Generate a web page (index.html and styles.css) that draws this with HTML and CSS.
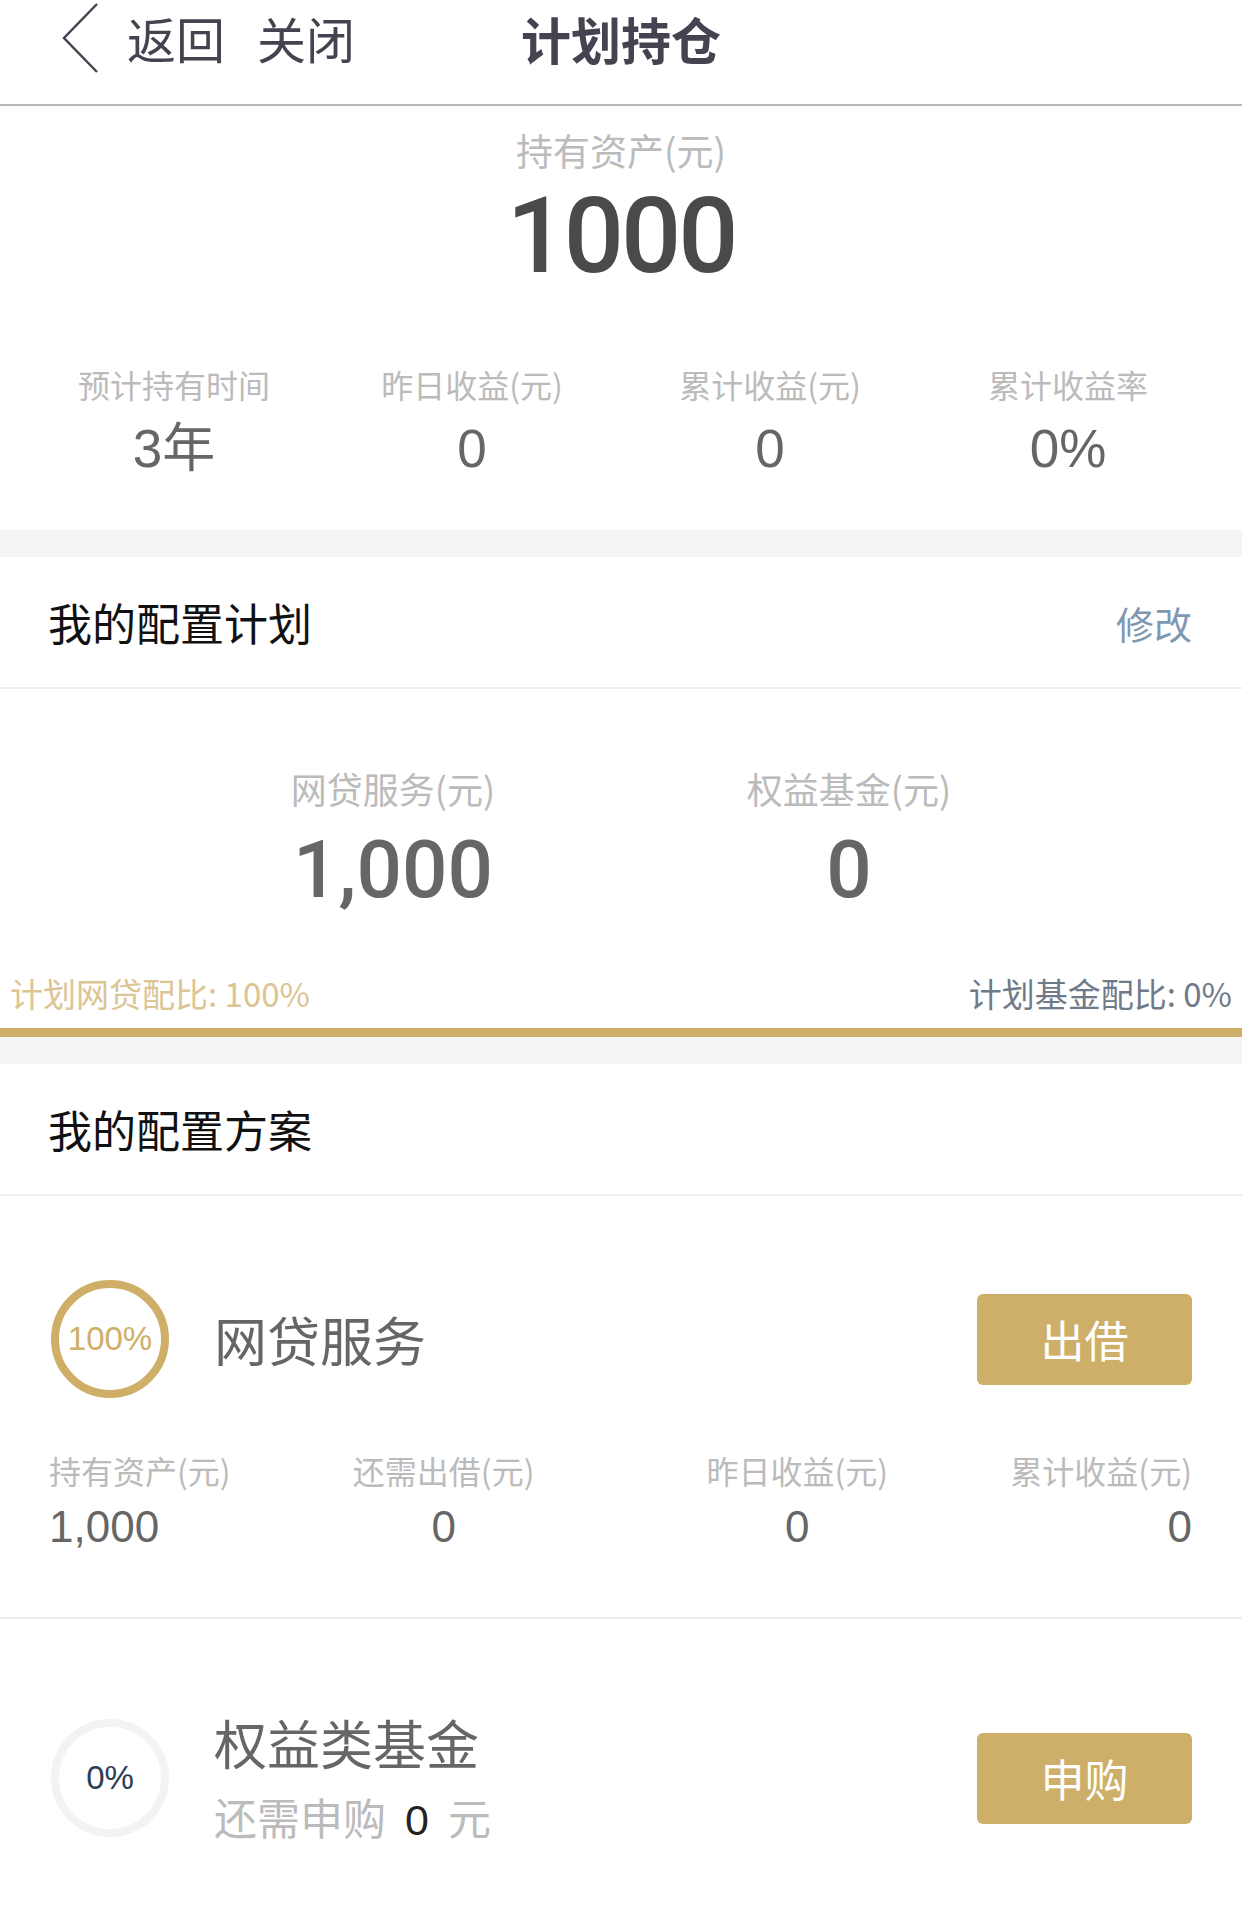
FILE: index.html
```html
<!DOCTYPE html>
<html lang="zh-CN">
<head>
  <meta charset="UTF-8" />
  <title>计划持仓</title>
  <meta name="viewport" content="width=device-width, initial-scale=1.0" />
  <link rel="stylesheet" href="styles.css">
</head>
<body>

<div class="nav">
  <div class="nav-left">
    <svg class="nav-back" width="36" height="70" viewBox="0 0 36 70">
      <polyline points="35,1 2,35 35,69" fill="none" stroke="#45434f" stroke-width="2.5" />
    </svg>
    <span class="nav-link">返回</span>
    <span class="nav-link nav-close">关闭</span>
  </div>
  <div class="nav-title">计划持仓</div>
  <div></div>
</div>

<section class="summary">
  <div class="summary-label">持有资产(元)</div>
  <div class="summary-amount">1000</div>
  <div class="summary-stats">
    <div class="summary-stat">
      <div class="stat-label">预计持有时间</div>
      <div class="stat-value">3年</div>
    </div>
    <div class="summary-stat">
      <div class="stat-label">昨日收益(元)</div>
      <div class="stat-value">0</div>
    </div>
    <div class="summary-stat">
      <div class="stat-label">累计收益(元)</div>
      <div class="stat-value">0</div>
    </div>
    <div class="summary-stat">
      <div class="stat-label">累计收益率</div>
      <div class="stat-value">0%</div>
    </div>
  </div>
</section>

<section class="card card-plan">
  <div class="card-head">
    <h2>我的配置计划</h2>
    <a class="card-edit">修改</a>
  </div>
  <div class="plan-amounts">
    <div class="plan-col">
      <div class="plan-label">网贷服务(元)</div>
      <div class="plan-value">1,000</div>
    </div>
    <div class="plan-col">
      <div class="plan-label">权益基金(元)</div>
      <div class="plan-value">0</div>
    </div>
  </div>
  <div class="plan-ratio">
    <span class="ratio-loan">计划网贷配比: 100%</span>
    <span class="ratio-fund">计划基金配比: 0%</span>
  </div>
  <div class="plan-bar"><div class="plan-bar-fill" style="width: 100%"></div></div>
</section>

<section class="card">
  <div class="card-head">
    <h2>我的配置方案</h2>
  </div>

  <div class="scheme scheme-loan">
    <div class="scheme-row">
      <div class="ring ring-full">100%</div>
      <div class="scheme-info">
        <div class="scheme-name">网贷服务</div>
      </div>
      <button class="scheme-btn">出借</button>
    </div>
    <div class="scheme-stats">
      <div class="stats-half">
        <div class="cell cell-left">
          <div class="stat-label">持有资产(元)</div>
          <div class="cell-value">1,000</div>
        </div>
        <div class="cell">
          <div class="stat-label">还需出借(元)</div>
          <div class="cell-value">0</div>
        </div>
      </div>
      <div class="stats-half">
        <div class="cell">
          <div class="stat-label">昨日收益(元)</div>
          <div class="cell-value">0</div>
        </div>
        <div class="cell cell-right">
          <div class="stat-label">累计收益(元)</div>
          <div class="cell-value">0</div>
        </div>
      </div>
    </div>
  </div>

  <div class="scheme scheme-fund">
    <div class="scheme-row">
      <div class="ring ring-empty">0%</div>
      <div class="scheme-info">
        <div class="scheme-name">权益类基金</div>
        <div class="scheme-sub">还需申购<span class="scheme-sub-num">0</span>元</div>
      </div>
      <button class="scheme-btn">申购</button>
    </div>
  </div>
</section>

</body>
</html>
```

FILE: styles.css
```css
body {
  font-family: "Noto Sans CJK SC", sans-serif;
  background: #f4f4f4;
  margin: 0;
  color: #333;
}

/* top bar */
.nav {
  display: grid;
  grid-template-columns: 1fr auto 1fr;
  align-items: center;
  height: 76px;
  padding-bottom: 28px;
  background: #fff;
  border-bottom: 2px solid #b8b8b8;
}

.nav-left {
  display: flex;
  align-items: center;
  padding-left: 62px;
}

.nav-back {
  margin-right: 29px;
}

.nav-link {
  font-size: 49px;
  line-height: 60px;
  color: #45434f;
}

.nav-close {
  margin-left: 32px;
}

.nav-title {
  font-size: 50px;
  line-height: 60px;
  font-weight: 700;
  color: #45434f;
}

/* holdings summary */
.summary {
  background: #fff;
  padding: 22px 25px 51px;
  margin-bottom: 27px;
  text-align: center;
}

.summary-label {
  font-size: 37px;
  line-height: 44px;
  color: #bbb;
}

.summary-amount {
  margin-top: 11px;
  font-family: Roboto, "Liberation Sans", sans-serif;
  font-weight: 500;
  font-size: 106px;
  line-height: 106px;
  letter-spacing: -3px;
  color: #4a4a4a;
}

.summary-stats {
  display: grid;
  grid-template-columns: repeat(4, 1fr);
  margin-top: 73px;
}

.stat-label {
  font-size: 32px;
  line-height: 44px;
  color: #bbb;
  white-space: nowrap;
}

.stat-value {
  margin-top: 13px;
  font-family: "Liberation Sans", "Noto Sans CJK SC", sans-serif;
  font-size: 53px;
  line-height: 60px;
  color: #666;
}

/* cards */
.card {
  background: #fff;
}

.card-plan {
  margin-bottom: 27px;
}

.card-head {
  display: flex;
  justify-content: space-between;
  align-items: center;
  height: 130px;
  padding: 0 50px 0 48px;
  border-bottom: 2px solid #eee;
}

.card-head h2 {
  margin: 0;
  font-size: 44px;
  font-weight: 400;
  color: #111;
}

.card-edit {
  font-size: 38px;
  color: #7f98b2;
  cursor: pointer;
}

.plan-amounts {
  display: grid;
  grid-template-columns: 1fr 1fr;
  padding: 75px 165px 0;
  text-align: center;
}

.plan-label {
  font-size: 36px;
  line-height: 48px;
  color: #bbb;
}

.plan-value {
  margin-top: 18px;
  font-family: Roboto, "Liberation Sans", sans-serif;
  font-weight: 500;
  font-size: 80px;
  line-height: 80px;
  color: #666;
}

.plan-ratio {
  display: flex;
  justify-content: space-between;
  margin-top: 63px;
  padding: 0 10px 15px;
  font-size: 33px;
  line-height: 40px;
}

.ratio-loan {
  color: #dcc493;
}

.ratio-fund {
  color: #6f7a88;
}

.plan-bar {
  height: 9px;
  background: #eee;
}

.plan-bar-fill {
  height: 100%;
  background: #cdaf6a;
}

/* allocation items */
.scheme {
  padding: 84px 50px 65px 49px;
}

.scheme-fund {
  padding: 92px 50px 76px 49px;
  border-top: 2px solid #eee;
}

.scheme-row {
  display: flex;
  align-items: center;
}

.ring {
  box-sizing: border-box;
  width: 118px;
  height: 118px;
  margin-left: 2px;
  border-radius: 50%;
  display: flex;
  align-items: center;
  justify-content: center;
  font-family: "Liberation Sans", sans-serif;
  font-size: 33px;
}

.ring-full {
  border: 8px solid #cfae68;
  color: #cfae68;
}

.ring-empty {
  border: 8px solid #f3f3f3;
  color: #2b3d55;
}

.scheme-info {
  flex: 1;
  margin-left: 45px;
}

.scheme-name {
  font-size: 53px;
  line-height: 62px;
  color: #666;
}

.scheme-sub {
  margin-top: 18px;
  font-size: 43px;
  line-height: 50px;
  color: #bbb;
}

.scheme-sub-num {
  margin: 0 19px;
  font-family: "Liberation Sans", sans-serif;
  color: #222;
}

.scheme-btn {
  width: 215px;
  height: 91px;
  border: none;
  border-radius: 6px;
  background: #cdaf6a;
  color: #fff;
  font-family: "Noto Sans CJK SC", sans-serif;
  font-size: 44px;
  cursor: pointer;
}

.scheme-stats {
  display: grid;
  grid-template-columns: 1fr 1fr;
  column-gap: 172px;
  margin-top: 50px;
}

.stats-half {
  display: flex;
  justify-content: space-between;
}

.cell {
  display: flex;
  flex-direction: column;
  align-items: center;
}

.cell-left {
  align-items: flex-start;
}

.cell-right {
  align-items: flex-end;
}

.cell-value {
  margin-top: 10px;
  font-family: "Liberation Sans", sans-serif;
  font-size: 44px;
  line-height: 50px;
  color: #666;
}
```
